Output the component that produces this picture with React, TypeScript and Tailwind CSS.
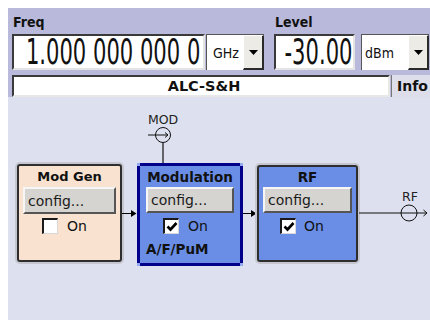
import React from "react";

function Check({ checked }: { checked: boolean }) {
  return (
    <div className="w-[16px] h-[16px] bg-white border-t-2 border-l-2 border-r border-b border-t-[#1a1a1a] border-l-[#1a1a1a] border-r-[#d8d8d8] border-b-[#d8d8d8] flex items-center justify-center">
      {checked && (
        <svg width="12" height="12" viewBox="0 0 12 12">
          <path d="M1.5 5.5 L4.5 8.5 L10.5 2" fill="none" stroke="#000" strokeWidth="2.6" />
        </svg>
      )}
    </div>
  );
}

function Config({ h }: { h: string }) {
  return (
    <div
      className={`${h} bg-[#d6d4d0] border-2 border-t-[#f6f6f6] border-l-[#f6f6f6] border-r-[#555555] border-b-[#555555] text-[14px] leading-none flex items-center pl-[3px] text-[#1a1a1a]`}
    >
      config...
    </div>
  );
}

function Arrow() {
  return (
    <svg width="15" height="9" viewBox="0 0 15 9" className="mt-[46px] shrink-0">
      <line x1="0" y1="4.5" x2="10" y2="4.5" stroke="#000" strokeWidth="1" />
      <path d="M9 1 L14.5 4.5 L9 8 Z" fill="#000" />
    </svg>
  );
}

function DropArrow() {
  return (
    <div className="w-[21px] h-full bg-[#ecebe6] border-r-2 border-b-2 border-r-[#2a2a2a] border-b-[#2a2a2a] border-t border-l border-t-[#ffffff] border-l-[#ffffff] flex items-center justify-center">
      <svg width="9" height="5" viewBox="0 0 9 5">
        <path d="M0 0 L9 0 L4.5 5 Z" fill="#000" />
      </svg>
    </div>
  );
}

export default function App() {
  return (
    <div className="w-[430px] h-[320px] bg-white pt-2 pl-2 flex flex-col overflow-hidden font-['DejaVu_Sans',sans-serif] text-[#111]">
      {/* Header */}
      <div className="h-[89px] bg-[#b9b9dc] flex flex-col shrink-0">
        <div className="pt-[6px] h-[22px] flex font-['DejaVu_Sans_Condensed',sans-serif] font-bold text-[14px] leading-[16px]">
          <div className="pl-[5px] w-[267px]">Freq</div>
          <div>Level</div>
        </div>
        <div className="mt-[4px] h-[36px] flex pl-[4px]">
          <div className="w-[193px] h-full bg-white border-2 border-t-[#3a3a3a] border-l-[#3a3a3a] border-r-[#e4e4e4] border-b-[#e4e4e4] flex items-center justify-end pr-[3px]">
            <span className="inline-block -ml-[95px] whitespace-pre origin-right scale-x-[0.67] font-['DejaVu_Sans_Condensed',sans-serif] text-[35px] leading-none text-[#111]">
              1.000 000 000 0
            </span>
          </div>
          <div className="ml-[1px] w-[58px] h-full bg-white border-t border-l border-t-[#555] border-l-[#555] flex items-stretch">
            <div className="flex-1 flex items-center pl-[6px] font-['DejaVu_Sans_Condensed',sans-serif] text-[14px] leading-none">
              GHz
            </div>
            <DropArrow />
          </div>
          <div className="ml-[10px] w-[81px] h-full bg-white border-2 border-t-[#3a3a3a] border-l-[#3a3a3a] border-r-[#e4e4e4] border-b-[#e4e4e4] flex items-center justify-end pr-[1px]">
            <span className="inline-block -ml-[40px] whitespace-pre origin-right scale-x-[0.67] font-['DejaVu_Sans_Condensed',sans-serif] text-[35px] leading-none text-[#111]">
              -30.00
            </span>
          </div>
          <div className="ml-[6px] w-[68px] h-full bg-white border-t border-l border-t-[#555] border-l-[#555] flex items-stretch">
            <div className="flex-1 flex items-center pl-[3px] font-['DejaVu_Sans_Condensed',sans-serif] text-[14px] leading-none">
              dBm
            </div>
            <DropArrow />
          </div>
        </div>
        <div className="mt-[5px] h-[22px] flex pl-[4px]">
          <div className="w-[378px] h-full bg-white border-2 border-t-[#3a3a3a] border-l-[#3a3a3a] border-r-[#e8e8e8] border-b-[#e8e8e8] flex items-center justify-center font-bold text-[14.5px] leading-none pl-[6px]">
            ALC-S&amp;H
          </div>
          <div className="ml-[1px] flex-1 h-full bg-[#dedeea] border-l border-l-[#777] flex items-center pl-[5px] font-bold text-[14px] leading-none">
            Info
          </div>
        </div>
      </div>

      {/* Diagram area */}
      <div className="flex-1 bg-[#dde1ef] flex flex-col">
        {/* MOD connector */}
        <div className="ml-[137px] mt-[16px] w-[36px] flex flex-col items-center">
          <div className="text-[12.5px] leading-[14px] text-[#222]">MOD</div>
          <svg width="36" height="36" viewBox="0 0 36 36">
            <line x1="3" y1="8" x2="23" y2="8" stroke="#111" strokeWidth="1" />
            <path d="M20 5.5 L23 8 L20 10.5" fill="none" stroke="#111" strokeWidth="1" />
            <circle cx="18" cy="8" r="7.5" fill="none" stroke="#111" strokeWidth="1" />
            <line x1="18" y1="15.5" x2="18" y2="36" stroke="#111" strokeWidth="1.2" />
          </svg>
        </div>

        {/* Blocks row */}
        <div className="flex items-start pl-[9px]">
          {/* Mod Gen */}
          <div className="mt-[1px] w-[105px] h-[98px] shrink-0 bg-[#f9e3d0] border-2 border-[#2e2e2e] rounded-[3px] shadow-[0_0_0_2px_#c6c6d0] flex flex-col px-[4px] pt-[3px]">
            <div className="text-center font-bold text-[13px] leading-[16px]">Mod Gen</div>
            <div className="mt-[2px]">
              <Config h="h-[27px]" />
            </div>
            <div className="mt-[4px] flex items-center pl-[19px]">
              <Check checked={false} />
              <span className="ml-[9px] text-[14px] leading-none">On</span>
            </div>
          </div>

          <Arrow />

          {/* Modulation */}
          <div className="relative w-[106px] h-[103px] shrink-0 bg-[#6a8ee6] border-[3px] border-[#00008a] rounded-[2px] flex flex-col px-[6px] pt-[3px]">
            <div className="text-center font-bold text-[13.5px] leading-[16px]">Modulation</div>
            <div className="mt-[2px]">
              <Config h="h-[26px]" />
            </div>
            <div className="mt-[5px] flex items-center pl-[17px]">
              <Check checked={true} />
              <span className="ml-[9px] text-[14px] leading-none">On</span>
            </div>
            <div className="mt-[7px] font-bold text-[13.5px] leading-[16px]">A/F/PuM</div>
            <div className="absolute -left-[3px] -top-[3px] w-[3px] h-[3px] bg-[#8fa8f0]" />
            <div className="absolute -right-[3px] -top-[3px] w-[3px] h-[3px] bg-[#8fa8f0]" />
            <div className="absolute -left-[3px] -bottom-[3px] w-[3px] h-[3px] bg-[#8fa8f0]" />
            <div className="absolute -right-[3px] -bottom-[3px] w-[3px] h-[3px] bg-[#8fa8f0]" />
          </div>

          <svg width="14" height="9" viewBox="0 0 14 9" className="mt-[46px] shrink-0">
            <line x1="0" y1="4.5" x2="9" y2="4.5" stroke="#000" strokeWidth="1" />
            <path d="M8 1 L13.5 4.5 L8 8 Z" fill="#000" />
          </svg>

          {/* RF */}
          <div className="mt-[2px] w-[101px] h-[97px] shrink-0 bg-[#6a8ee6] border-2 border-[#2e2e2e] rounded-[3px] shadow-[0_0_0_2px_#c6c6d0] flex flex-col px-[4px] pt-[2px]">
            <div className="text-center font-bold text-[13.5px] leading-[16px]">RF</div>
            <div className="mt-[2px]">
              <Config h="h-[26px]" />
            </div>
            <div className="mt-[5px] flex items-center pl-[17px]">
              <Check checked={true} />
              <span className="ml-[8px] text-[14px] leading-none">On</span>
            </div>
          </div>

          {/* RF output */}
          <div className="w-[72px] shrink-0 flex flex-col">
            <div className="mt-[27px] ml-[42px] w-[20px] text-center text-[12.5px] leading-[14px] text-[#222]">RF</div>
            <svg width="72" height="20" viewBox="0 0 72 20">
              <line x1="1" y1="9" x2="69" y2="9" stroke="#111" strokeWidth="1" />
              <circle cx="51" cy="9" r="8" fill="none" stroke="#111" strokeWidth="1" />
              <path d="M65.5 6 L69 9 L65.5 12" fill="none" stroke="#111" strokeWidth="1" />
            </svg>
          </div>
        </div>
      </div>
    </div>
  );
}
